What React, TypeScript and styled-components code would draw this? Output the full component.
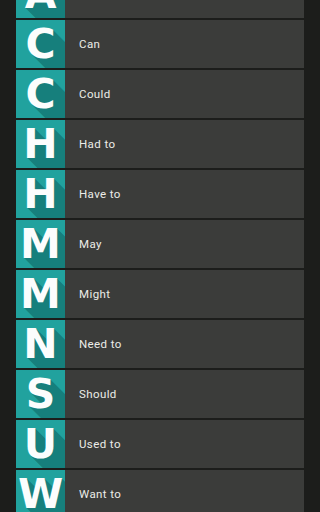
import React from 'react';
import styled, { createGlobalStyle } from 'styled-components';

const verbs = [
  { letter: 'A', text: 'Able to' },
  { letter: 'C', text: 'Can' },
  { letter: 'C', text: 'Could' },
  { letter: 'H', text: 'Had to' },
  { letter: 'H', text: 'Have to' },
  { letter: 'M', text: 'May' },
  { letter: 'M', text: 'Might' },
  { letter: 'N', text: 'Need to' },
  { letter: 'S', text: 'Should' },
  { letter: 'U', text: 'Used to' },
  { letter: 'W', text: 'Want to' },
];

// long flat shadow, one layer per pixel
const longShadow = Array.from({ length: 50 }, (_, i) => `${i + 1}px ${i + 1}px 0 #167f7c`).join(', ');

function App() {
  return (
    <>
      <GlobalStyle />
      <List>
        {verbs.map((v, i) => (
          <Row key={i}>
            <Tile>
              <Letter>{v.letter}</Letter>
            </Tile>
            <Label>{v.text}</Label>
          </Row>
        ))}
      </List>
    </>
  );
}

const GlobalStyle = createGlobalStyle`
  html, body {
    margin: 0;
    padding: 0;
    background: #1c1d1b;
    overflow: hidden;
  }
`;

const List = styled.div`
  display: flex;
  flex-direction: column;
  gap: 2px;
  margin-top: -30px;
  padding: 0 16px;
`;

const Row = styled.div`
  display: flex;
  height: 48px;
  background: #3b3c3a;
`;

const Tile = styled.div`
  width: 49px;
  flex-shrink: 0;
  background: #21a29e;
  display: flex;
  align-items: center;
  justify-content: center;
  overflow: hidden;
`;

const Letter = styled.span`
  font-family: 'DejaVu Sans', sans-serif;
  font-weight: 700;
  font-size: 41px;
  line-height: 48px;
  color: #fbfdfd;
  text-shadow: ${longShadow};
`;

const Label = styled.div`
  display: flex;
  align-items: center;
  padding-left: 14px;
  font-family: Roboto, sans-serif;
  font-size: 11.5px;
  letter-spacing: 0.4px;
  color: #ecece8;
`;

export default App;
